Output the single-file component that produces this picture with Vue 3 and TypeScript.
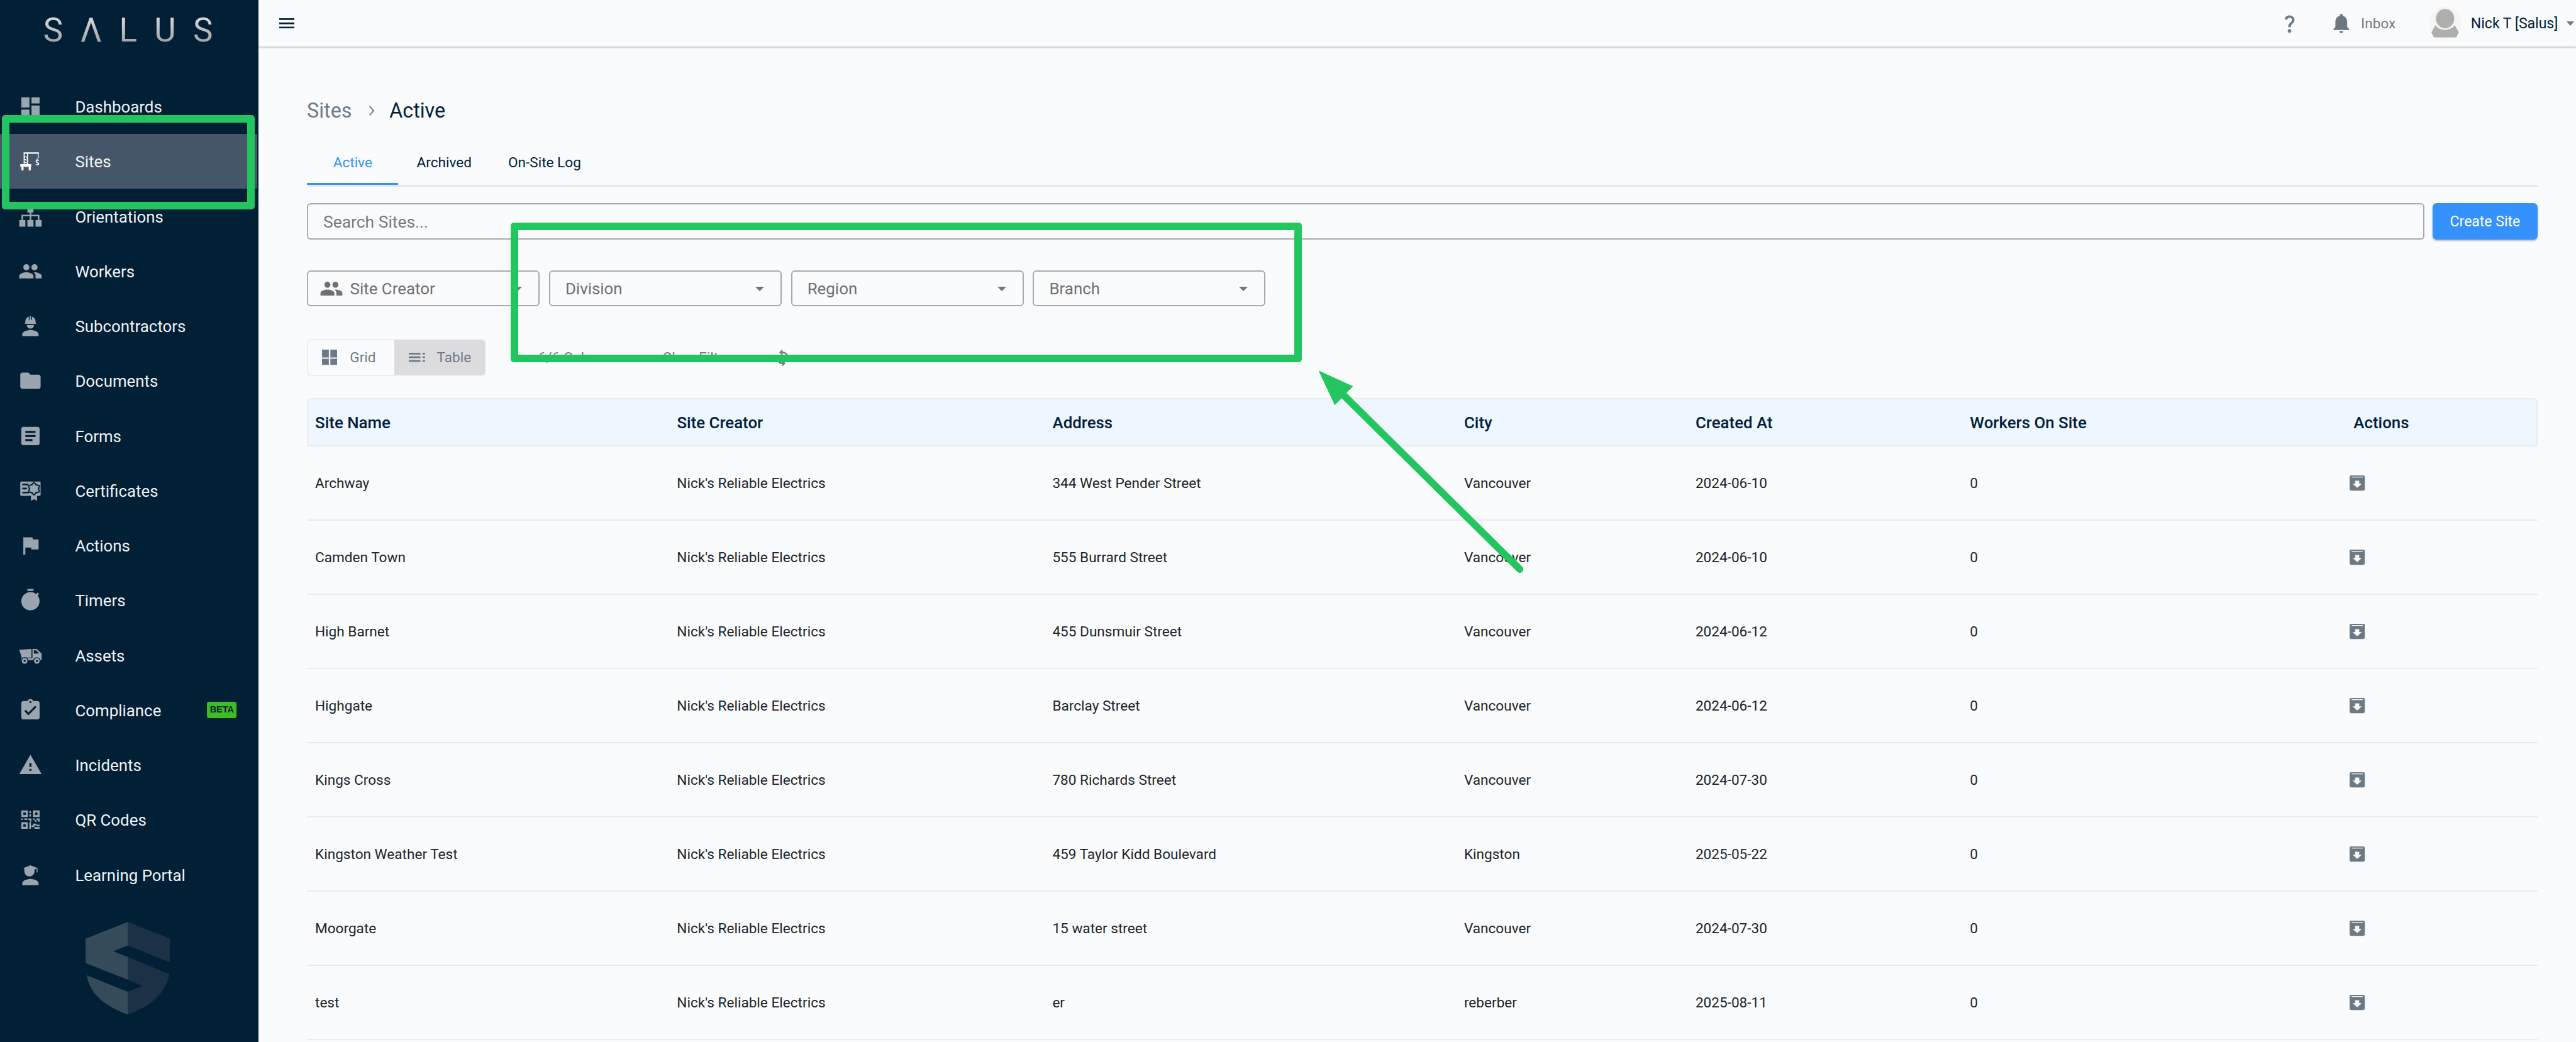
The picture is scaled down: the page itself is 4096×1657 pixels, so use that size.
<template>
  <div class="page">
    <aside class="sidebar">
      <div class="logo">
        <span v-for="(letter, i) in logoLetters" :key="i">{{ letter }}</span>
      </div>
      <nav class="nav">
        <div v-for="item in navItems" :key="item.label" class="nav-item" :class="{ 'nav-item_active': item.active }">
          <svg class="nav-icon" viewBox="0 0 24 24">
            <path v-for="(p, i) in item.paths" :key="i" :d="p.d" :class="p.tone" />
          </svg>
          <span class="nav-label">{{ item.label }}</span>
          <span v-if="item.beta" class="beta">BETA</span>
        </div>
      </nav>
      <svg class="shield" viewBox="0 0 166.3 182.6">
        <path class="shield-left" d="M83.3 0L0 33v48l83.3 33V69L54 58l29.3-11.5zM2.3 105l81 32.8v44.8C35 165 8 140 2.3 105z" />
        <path class="shield-right" d="M83.3 0l83 33v46.7l-83-33.2zM83.3 69l81.4 33.5C159 140 130 165 83.3 182.6v-44.8l29-11.8-29-12z" />
      </svg>
    </aside>

    <div class="content">
      <header class="topbar">
        <svg class="hamburger" viewBox="0 0 30 20"><path d="M0 0h30v3.4H0zM0 8.3h30v3.4H0zM0 16.6h30V20H0z" /></svg>
        <div class="topbar-right">
          <svg class="help" viewBox="0 0 24 24">
            <path d="M11.07 12.85c.77-1.39 2.25-2.21 3.11-3.44.91-1.29.4-3.7-2.18-3.7-1.69 0-2.52 1.28-2.87 2.34L6.54 6.96C7.25 4.83 9.18 3 11.99 3c2.35 0 3.96 1.07 4.78 2.41.7 1.15 1.11 3.3.03 4.9-1.2 1.77-2.35 2.31-2.97 3.45-.25.46-.35.76-.35 2.24h-2.89c-.01-.78-.13-2.05.48-3.15zM14 20c0 1.1-.9 2-2 2s-2-.9-2-2 .9-2 2-2 2 .9 2 2z" />
          </svg>
          <svg class="bell" viewBox="0 0 24 24">
            <path d="M12 22c1.1 0 2-.9 2-2h-4c0 1.1.89 2 2 2zm6-6v-5c0-3.07-1.64-5.64-4.5-6.32V4c0-.83-.67-1.5-1.5-1.5s-1.5.67-1.5 1.5v.68C7.63 5.36 6 7.92 6 11v5l-2 2v1h16v-1l-2-2z" />
          </svg>
          <span class="inbox">Inbox</span>
          <svg class="avatar" viewBox="0 0 64 64">
            <circle cx="32" cy="32" r="32" fill="#f5f5f5" />
            <ellipse cx="32" cy="23" rx="18" ry="19" fill="#aeaeac" />
            <path d="M13 36c4 6 11 9 19 9s15-3 19-9l8 14-5 10H10L5 50z" fill="#aeaeac" />
          </svg>
          <span class="user">Nick T [Salus]</span>
          <span class="user-caret"></span>
        </div>
      </header>

      <main class="main">
        <div class="crumbs">
          <span class="crumb-parent">Sites</span>
          <svg class="crumb-sep" viewBox="0 0 12 20"><path d="M2 1l8 9-8 9" /></svg>
          <span class="crumb-current">Active</span>
        </div>

        <div class="tabs">
          <div v-for="tab in tabs" :key="tab" class="tab" :class="{ tab_active: tab === 'Active' }">{{ tab }}</div>
        </div>

        <div class="search-row">
          <input class="search" type="text" placeholder="Search Sites..." />
          <button class="create">Create Site</button>
        </div>

        <div class="filters">
          <div class="filter">
            <svg class="filter-icon" viewBox="0 0 24 24">
              <path d="M16 11c1.66 0 2.99-1.34 2.99-3S17.66 5 16 5c-1.66 0-3 1.34-3 3s1.34 3 3 3zm-8 0c1.66 0 2.99-1.34 2.99-3S9.66 5 8 5C6.34 5 5 6.34 5 8s1.34 3 3 3zm0 2c-2.33 0-7 1.17-7 3.5V19h14v-2.5c0-2.33-4.67-3.5-7-3.5zm8 0c-.29 0-.62.02-.97.05 1.16.84 1.97 1.97 1.97 3.45V19h6v-2.5c0-2.33-4.67-3.5-7-3.5z" />
            </svg>
            <span>Site Creator</span>
            <i class="filter-caret"></i>
          </div>
          <div v-for="f in filters" :key="f" class="filter filter_plain">
            <span>{{ f }}</span>
            <i class="filter-caret"></i>
          </div>
        </div>

        <div class="tools">
          <div class="toggle">
            <div class="toggle-btn toggle-btn_grid">
              <svg class="toggle-grid" viewBox="0 0 30 30"><path d="M0 0h13.5v15.5H0zM16.5 0H30v15.5H16.5zM0 18h13.5v12H0zM16.5 18H30v12H16.5z" /></svg>
              <span>Grid</span>
            </div>
            <div class="toggle-btn toggle-btn_on">
              <svg class="toggle-table" viewBox="0 0 32 18"><path d="M0 0h23v3.5H0zM0 7.2h23v3.5H0zM0 14.5h23V18H0zM27 0h5v3.5h-5zM27 7.2h5v3.5h-5zM27 14.5h5V18h-5z" /></svg>
              <span>Table</span>
            </div>
          </div>
          <span class="tool-text tool-text_columns">6/6 Columns</span>
          <span class="tool-text tool-text_clear">Clear Filters</span>
          <svg class="refresh" viewBox="0 0 24 24">
            <path d="M12 4V1L8 5l4 4V6c3.31 0 6 2.69 6 6 0 1.01-.25 1.97-.7 2.8l1.46 1.46C19.54 15.03 20 13.57 20 12c0-4.42-3.58-8-8-8zm0 14c-3.31 0-6-2.69-6-6 0-1.01.25-1.97.7-2.8L5.24 7.74C4.46 8.97 4 10.43 4 12c0 4.42 3.58 8 8 8v3l4-4-4-4v3z" />
          </svg>
        </div>

        <div class="table">
          <div class="row row_head">
            <div v-for="col in columns" :key="col">{{ col }}</div>
          </div>
          <div v-for="site in sites" :key="site.name" class="row">
            <div>{{ site.name }}</div>
            <div>Nick's Reliable Electrics</div>
            <div>{{ site.address }}</div>
            <div>{{ site.city }}</div>
            <div>{{ site.created }}</div>
            <div>0</div>
            <div>
              <svg class="archive" viewBox="0 0 30 30">
                <path class="archive-box" d="M3 0h24a3 3 0 0 1 3 3v24a3 3 0 0 1-3 3H3a3 3 0 0 1-3-3V3a3 3 0 0 1 3-3z" />
                <path class="archive-mark" d="M4 2.5h22v1.4H4zM11 10.5h8v6h5l-9 8-9-8h5z" />
              </svg>
            </div>
          </div>
        </div>
      </main>
    </div>

    <!-- annotations drawn on top of the screenshot -->
    <div class="mark mark_nav"></div>
    <div class="mark mark_filters"></div>
    <svg class="arrow" viewBox="0 0 5066 2050">
      <path class="arrow-line" d="M2989 1120L2643 778" />
      <path class="arrow-head" d="M2593 729L2661 760L2648 773L2638 784L2625 797Z" />
    </svg>
  </div>
</template>

<script setup lang="ts">
type IconPath = { d: string; tone?: string };
type NavItem = { label: string; paths: IconPath[]; active?: boolean; beta?: boolean };

const logoLetters = ["S", "Λ", "L", "U", "S"];

const star = (cx: number, cy: number, outer: number, inner: number, points: number) => {
  let d = "";
  for (let i = 0; i < points * 2; i++) {
    const r = i % 2 ? inner : outer;
    const a = (Math.PI * i) / points - Math.PI / 2;
    d += `${i ? "L" : "M"}${(cx + r * Math.cos(a)).toFixed(2)} ${(cy + r * Math.sin(a)).toFixed(2)}`;
  }
  return d + "Z";
};

const one = (d: string): IconPath[] => [{ d }];

const navItems: NavItem[] = [
  { label: "Dashboards", paths: one("M3 13h8V3H3v10zm0 8h8v-6H3v6zm10 0h8V11h-8v10zm0-18v6h8V3h-8z") },
  {
    label: "Sites",
    active: true,
    paths: [
      {
        d: "M5.3 3.2h15v1.5H5.3zM5.3 4.7h1V14.8h-1zM8.6 4.7h1V14.8h-1zM6.3 6.6l2.3 1.3v.9L6.3 7.5zM6.3 9.4l2.3 1.3v.9L6.3 10.3zM6.3 12.2l2.3 1.3v.9l-2.3-1.3zM2 14.8h10.8v2.6H2zM3.2 17.4h2V21h-2zM10.3 17.4h2V21h-2zM19.3 4.7h.8v4.6h-.8z",
      },
      { tone: "line", d: "M18.6 9.4v1.2M20 11.6c-.6-.8-2.5-.7-2.5.5 0 1.3 2.7 1 2.7 2.4 0 1.2-2.1 1.3-2.9.5" },
    ],
  },
  {
    label: "Orientations",
    paths: one("M9 3h6v5h-2.2v2.2H20.8V15.5h-1.6v-3.7h-6.4v3.7h-1.6v-3.7H4.8v3.7H3.2v-5.3h8V8H9zM1 15.5h6V22H1zM9 15.5h6V22H9zM17 15.5h6V22h-6z"),
  },
  {
    label: "Workers",
    paths: one("M16 11c1.66 0 2.99-1.34 2.99-3S17.66 5 16 5c-1.66 0-3 1.34-3 3s1.34 3 3 3zm-8 0c1.66 0 2.99-1.34 2.99-3S9.66 5 8 5C6.34 5 5 6.34 5 8s1.34 3 3 3zm0 2c-2.33 0-7 1.17-7 3.5V19h14v-2.5c0-2.33-4.67-3.5-7-3.5zm8 0c-.29 0-.62.02-.97.05 1.16.84 1.97 1.97 1.97 3.45V19h6v-2.5c0-2.33-4.67-3.5-7-3.5z"),
  },
  {
    label: "Subcontractors",
    paths: [
      { d: "M12 16c-2.67 0-8 1.34-8 4v2h16v-2c0-2.66-5.33-4-8-4zM8.4 11h7.2a3.6 3.6 0 0 1-7.2 0zM6.5 8.6H7V7.5a5 5 0 0 1 3.4-4.7v3h1V2.2h1.2v3.6h1V2.8A5 5 0 0 1 17 7.5v1.1h.5v1.3h-11z" },
    ],
  },
  { label: "Documents", paths: one("M10 4H4c-1.1 0-1.99.9-1.99 2L2 18c0 1.1.9 2 2 2h16c1.1 0 2-.9 2-2V8c0-1.1-.9-2-2-2h-8l-2-2z") },
  { label: "Forms", paths: one("M19 3H5c-1.1 0-2 .9-2 2v14c0 1.1.9 2 2 2h14c1.1 0 2-.9 2-2V5c0-1.1-.9-2-2-2zm-5 14H7v-2h7v2zm3-4H7v-2h10v2zm0-4H7V7h10v2z") },
  {
    label: "Certificates",
    paths: [
      { d: "M3 3h18a1 1 0 0 1 1 1v12a1 1 0 0 1-1 1H3a1 1 0 0 1-1-1V4a1 1 0 0 1 1-1zM12.5 16h6v6l-3-1.7-3 1.7z" },
      { tone: "cut", d: "M4 5h6v1.6H4zM4 9h4.5v1.6H4zM4 13h6.5v1.6H4z" + star(15.5, 10, 7, 5.2, 6) },
      { d: star(15.5, 10, 5.5, 3.6, 6) },
    ],
  },
  { label: "Actions", paths: one("M14.4 6L14 4H5v17h2v-7h5.6l.4 2h7V6z") },
  { label: "Timers", paths: one("M15 1H9v2h6V1zm-4 13h2V8h-2v6zm8.03-6.61l1.42-1.42c-.43-.51-.9-.99-1.41-1.41l-1.42 1.42C16.07 4.74 14.12 4 12 4c-4.97 0-9 4.03-9 9s4.02 9 9 9 9-4.03 9-9c0-2.12-.74-4.07-1.97-5.61z") },
  {
    label: "Assets",
    paths: [
      { d: "M1 6.3L13 5.5V14H3.4zM14 5.5h4.2L23 10v6.5H2.8V14.6H14z" },
      { tone: "cut", d: "M15.4 7h2.2l2.8 3h-5zM2.7 17.3a3.6 3.6 0 1 0 7.2 0a3.6 3.6 0 1 0-7.2 0zM14.7 17.3a3.6 3.6 0 1 0 7.2 0a3.6 3.6 0 1 0-7.2 0z" },
      { d: "M3.5 17.3a2.8 2.8 0 1 0 5.6 0a2.8 2.8 0 1 0-5.6 0zM15.5 17.3a2.8 2.8 0 1 0 5.6 0a2.8 2.8 0 1 0-5.6 0z" },
      { tone: "cut", d: "M5.2 17.3a1.1 1.1 0 1 0 2.2 0a1.1 1.1 0 1 0-2.2 0zM17.2 17.3a1.1 1.1 0 1 0 2.2 0a1.1 1.1 0 1 0-2.2 0z" },
    ],
  },
  {
    label: "Compliance",
    beta: true,
    paths: one("M19 3h-4.18C14.4 1.84 13.3 1 12 1c-1.3 0-2.4.84-2.82 2H5c-1.1 0-2 .9-2 2v14c0 1.1.9 2 2 2h14c1.1 0 2-.9 2-2V5c0-1.1-.9-2-2-2zm-7 0c.55 0 1 .45 1 1s-.45 1-1 1-1-.45-1-1 .45-1 1-1zm-2 14l-4-4 1.41-1.41L10 14.17l6.59-6.59L18 9l-8 8z"),
  },
  { label: "Incidents", paths: one("M1 21h22L12 2 1 21zm12-3h-2v-2h2v2zm0-4h-2v-4h2v4z") },
  {
    label: "QR Codes",
    paths: one("M3 3h6.4v6.4H3zM5 5v2.4h2.4V5zM14.6 3H21v6.4h-6.4zM16.6 5v2.4H19V5zM3 14.6h6.4V21H3zM5 16.6V19h2.4v-2.4zM10.9 3.6h1.6v2h-1.6zM10.9 6.6h1.6V9h-1.6zM3 10.8h1.6v1.6H3zM6 10.8h3v1.6H6zM10 10.8h3v1.6h-3zM14.6 10.8h1.6v1.6h-1.6zM18 10.8h3v1.6h-3zM11.5 12.4H13V14h-1.5zM16.2 12.4h1.8V14h-1.8zM19.4 12.4H21V14h-1.6zM10.9 14.6h1.6V21h-1.6zM14.6 16h3.4v1.6h-3.4zM13 17.6h3v1.8h-3zM18 17h3v1.6h-3zM16 19.4h5V21h-5z"),
  },
  {
    label: "Learning Portal",
    paths: one("M12 16c-2.67 0-8 1.34-8 4v2h16v-2c0-2.66-5.33-4-8-4zM12 2.5l7 2.8v4.2h-.9V5.7l-2.1.9v1.9a5 5 0 0 1-10 0V6.2L5 5.3z"),
  },
];

const tabs = ["Active", "Archived", "On-Site Log"];
const filters = ["Division", "Region", "Branch"];
const columns = ["Site Name", "Site Creator", "Address", "City", "Created At", "Workers On Site", "Actions"];

const sites = [
  { name: "Archway", address: "344 West Pender Street", city: "Vancouver", created: "2024-06-10" },
  { name: "Camden Town", address: "555 Burrard Street", city: "Vancouver", created: "2024-06-10" },
  { name: "High Barnet", address: "455 Dunsmuir Street", city: "Vancouver", created: "2024-06-12" },
  { name: "Highgate", address: "Barclay Street", city: "Vancouver", created: "2024-06-12" },
  { name: "Kings Cross", address: "780 Richards Street", city: "Vancouver", created: "2024-07-30" },
  { name: "Kingston Weather Test", address: "459 Taylor Kidd Boulevard", city: "Kingston", created: "2025-05-22" },
  { name: "Moorgate", address: "15 water street", city: "Vancouver", created: "2024-07-30" },
  { name: "test", address: "er", city: "reberber", created: "2025-08-11" },
];
</script>

<style scoped>
.page {
  position: relative;
  display: flex;
  width: 4096px;
  height: 1657px;
  overflow: hidden;
  background: #fafbfd;
  font-family: Roboto, "Liberation Sans", sans-serif;
  font-size: 22.6px;
  color: #02203a;
}

.sidebar {
  flex: none;
  width: 410.5px;
  height: 100%;
  background: #011f35;
  color: #f0f3f5;
}

.logo {
  display: flex;
  justify-content: space-between;
  align-items: center;
  height: 97.8px;
  margin: 0 72px 28.2px 68.7px;
  font-size: 53px;
  line-height: 1;
}

.logo span {
  background: linear-gradient(#e0e0e3, #98989b);
  -webkit-background-clip: text;
  background-clip: text;
  color: transparent;
}

.nav-item {
  display: flex;
  align-items: center;
  height: 87.26px;
  width: 408.8px;
  padding-left: 29.1px;
  box-sizing: border-box;
  font-size: 25.86px;
}

.nav-label {
  padding-top: 1px;
}

.nav-item_active {
  background: #445667;
}

.nav-icon {
  flex: none;
  width: 38.8px;
  height: 38.8px;
  margin-right: 51.5px;
  fill: #9aa5af;
}

.nav-item_active .nav-icon {
  fill: #fff;
}

.nav-icon .cut {
  fill: #011f35;
}

.nav-icon .line {
  fill: none;
  stroke: #fff;
  stroke-width: 1;
}

.beta {
  margin-left: auto;
  margin-right: 32.5px;
  width: 46.9px;
  height: 25.9px;
  border-radius: 3px;
  background: #3cbe22;
  color: #01203a;
  font-family: "Liberation Sans", sans-serif;
  font-size: 14.5px;
  font-weight: 700;
  line-height: 25.9px;
  text-align: center;
}

.shield {
  display: block;
  width: 134.4px;
  height: 147.5px;
  margin: 31.5px 0 0 135.7px;
}

.shield-left {
  fill: #364b5a;
}

.shield-right {
  fill: #1c3146;
}

.content {
  flex: 1;
  min-width: 0;
}

.topbar {
  display: flex;
  align-items: center;
  justify-content: space-between;
  height: 74.3px;
  padding: 0 3.2px 0 33.2px;
  box-sizing: border-box;
  background: #fafbfd;
  box-shadow: 0 1px 3px rgba(0, 0, 0, 0.35);
}

.hamburger {
  width: 24.2px;
  height: 16.2px;
  fill: #02203a;
}

.topbar-right {
  display: flex;
  align-items: center;
}

.help {
  width: 35px;
  height: 35px;
  fill: #6f7b85;
  margin-right: 46px;
}

.bell {
  width: 37.6px;
  height: 37.6px;
  fill: #6a7882;
  margin-right: 13px;
}

.inbox {
  color: #6f7b85;
  margin-right: 52.5px;
}

.avatar {
  width: 51.7px;
  height: 51.7px;
  margin-right: 15.4px;
}

.user {
  font-size: 23px;
  margin-right: 13.5px;
}

.user-caret {
  width: 0;
  height: 0;
  border-left: 6.6px solid transparent;
  border-right: 6.6px solid transparent;
  border-top: 7.4px solid #6f7b85;
}

.main {
  padding: 81px 61.4px 0 77.6px;
}

.crumbs {
  display: flex;
  align-items: center;
  box-sizing: border-box;
  height: 40px;
  padding-top: 1px;
  font-size: 32.3px;
}

.crumb-parent {
  color: #6d7a85;
}

.crumb-sep {
  width: 9.7px;
  height: 16.2px;
  margin: 0 23px 0 27px;
  fill: none;
  stroke: #6d7a85;
  stroke-width: 2.4;
}

.tabs {
  display: flex;
  margin-top: 27.8px;
  border-bottom: 3px solid #e8e9eb;
}

.tab {
  box-sizing: border-box;
  height: 71px;
  padding: 0 29px;
  line-height: 71px;
}

.tab_active {
  width: 145.4px;
  padding: 0;
  text-align: center;
  color: #3491fd;
  border-bottom: 3.4px solid #3491fd;
}

.search-row {
  display: flex;
  gap: 13.3px;
  margin-top: 25.9px;
}

.search {
  flex: 1;
  min-width: 0;
  height: 58.2px;
  box-sizing: border-box;
  padding: 2px 24px 0;
  border: 2px solid #a8a9ab;
  border-radius: 6px;
  background: transparent;
  font-family: inherit;
  font-size: 26.4px;
  outline: none;
}

.search::placeholder {
  color: #76797c;
  opacity: 1;
}

.create {
  flex: none;
  width: 166.4px;
  height: 58.2px;
  border: 0;
  border-radius: 6.5px;
  background: #3491fd;
  color: #fff;
  font-family: inherit;
  font-size: 23px;
  box-shadow: 0 2px 3px rgba(0, 0, 0, 0.28);
}

.filters {
  display: flex;
  gap: 14.8px;
  margin-top: 48.5px;
}

.filter {
  display: flex;
  align-items: center;
  box-sizing: border-box;
  width: 370px;
  height: 57.4px;
  padding: 2px 26px 0 18px;
  border: 2px solid #a8a9ab;
  border-radius: 6px;
  font-size: 25.86px;
  color: #6f7071;
}

.filter_plain {
  padding-left: 24px;
}

.filter-icon {
  width: 38px;
  height: 38px;
  margin-right: 10.5px;
  fill: #6f7071;
}

.filter-caret {
  width: 0;
  height: 0;
  margin-left: auto;
  border-left: 7.7px solid transparent;
  border-right: 7.7px solid transparent;
  border-top: 7.7px solid #757575;
}

.tools {
  display: flex;
  align-items: center;
  margin-top: 52.4px;
}

.toggle {
  display: flex;
  box-sizing: border-box;
  width: 285.2px;
  height: 58.2px;
  border: 2px solid #eceef0;
  border-radius: 6.5px;
  overflow: hidden;
  color: #6f7b85;
}

.toggle-btn {
  display: flex;
  align-items: center;
}

.toggle-btn_grid {
  width: 136.5px;
  padding-left: 22px;
  box-sizing: border-box;
}

.toggle-btn_on {
  flex: 1;
  padding-left: 23.5px;
  background: #dcdcde;
}

.toggle-grid {
  width: 24.2px;
  height: 24.2px;
  margin-right: 20px;
  fill: #6b7a86;
}

.toggle-table {
  width: 25.9px;
  height: 14.5px;
  margin-right: 18.6px;
  fill: #6f7a85;
}

.tool-text {
  color: #6f7b85;
}

.tool-text_columns {
  margin-left: 82.4px;
}

.tool-text_clear {
  margin-left: 68px;
}

.refresh {
  width: 30px;
  height: 30px;
  margin-left: 56px;
  fill: #6e7b85;
}

.table {
  margin-top: 35.6px;
}

.row {
  display: grid;
  grid-template-columns: 575.3px 597.1px 654.5px 368px 436.3px 610px 1fr;
  align-items: center;
  box-sizing: border-box;
  height: 118px;
  padding: 1px 0 0 12.9px;
  border-bottom: 2px solid #e9ebee;
  color: #202428;
}

.row_head {
  height: 76.8px;
  border: 2px solid #e9ebee;
  padding-left: 11px;
  border-radius: 8px 8px 0 0;
  background: #eef6ff;
  color: #02203a;
  font-size: 25.86px;
  font-weight: 500;
}

.archive {
  display: block;
  width: 24.2px;
  height: 24.2px;
  margin-left: -5.7px;
}

.archive-box {
  fill: #6c7a85;
}

.archive-mark {
  fill: #fff;
}

.mark {
  position: absolute;
  box-sizing: border-box;
  border: 12px solid #23c55e;
  border-radius: 5px;
}

.mark_nav {
  left: 3.2px;
  top: 182.6px;
  width: 401.6px;
  height: 150.3px;
}

.mark_filters {
  left: 812px;
  top: 353.9px;
  width: 1258px;
  height: 222.2px;
}

.arrow {
  position: absolute;
  left: 0;
  top: 0;
  width: 4096px;
  height: 1657px;
  pointer-events: none;
}

.arrow-line {
  fill: none;
  stroke: #23c55e;
  stroke-width: 14;
  stroke-linecap: round;
}

.arrow-head {
  fill: #23c55e;
}
</style>
